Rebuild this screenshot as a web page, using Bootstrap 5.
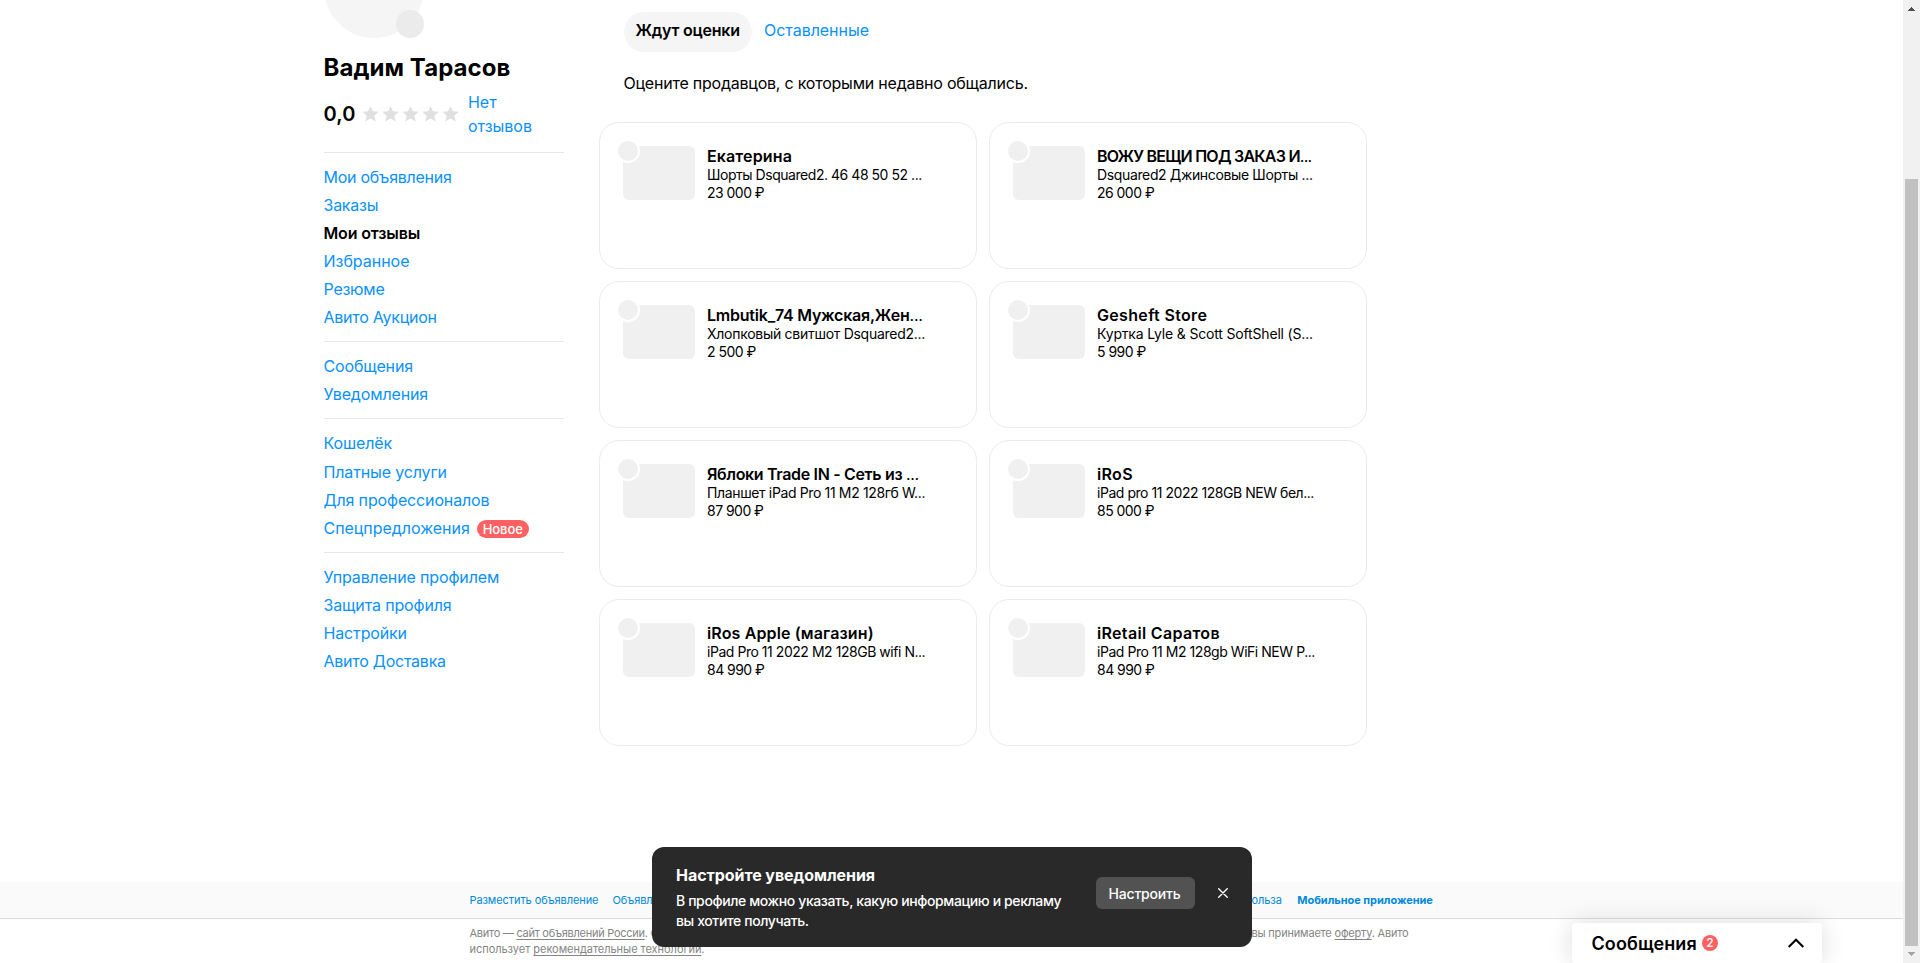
<!DOCTYPE html>
<html lang="ru">
<head>
<meta charset="utf-8">
<meta name="viewport" content="width=device-width, initial-scale=1">
<title>Мои отзывы</title>
<link href="https://cdn.jsdelivr.net/npm/bootstrap@5.3.0/dist/css/bootstrap.min.css" rel="stylesheet">
<style>
html, body { height: 963px; overflow: hidden; }
body { font-family: Inter, "Open Sans", sans-serif; font-size: 16px; line-height: 24px; color: #000; background: #fff; }
a { color: #0a91fb; text-decoration: none; }
.page { width: 1903px; height: 963px; overflow: hidden; }
.content-area { height: 882px; padding-left: 323.5px; }
.sidebar { width: 240px; margin-top: -62px; letter-spacing: -.14px; }
.avatar { width: 100px; height: 100px; background: #f5f5f5; border-radius: 50%; position: relative; }
.avatar-edit { position: absolute; right: 0; bottom: 0; width: 28px; height: 28px; border-radius: 50%; background: #ebebeb; }
.user-name { font-size: 24px; line-height: 32px; font-weight: 700; letter-spacing: .06px; margin: 14px 0 6px; white-space: nowrap; }
.score { font-size: 20px; font-weight: 600; width: 38px; letter-spacing: .2px; }
.rating { height: 48px; }
.stars { margin-right: 6.5px; }
.sidebar hr { margin: 12px 0; border: 0; height: 1px; background: #e7e7e7; opacity: 1; }
.sidebar .rating + hr { margin-top: 14px; }
.menu { display: flex; flex-direction: column; gap: 4px; }
.menu a { white-space: nowrap; height: 24px; display: flex; align-items: center; }
.menu a.current { color: #000; font-weight: 600; }
.menu a.tall { height: 25px; align-items: flex-start; }
.tag-new { background: #ff6163; color: #fff; font-size: 13px; font-weight: 500; line-height: 18px; height: 18px; width: 52px; border-radius: 9px; margin: 1px 0 0 7px; text-align: center; }
.tight { letter-spacing: -.25px; }
.even { letter-spacing: -.03px; }
.reviews { margin-left: 35.5px; padding-top: 12px; width: 768px; }
.tabs { margin-left: 25px; height: 40px; letter-spacing: -.04px; }
.tabs a { height: 40px; padding: 6px 12px; border-radius: 20px; white-space: nowrap; width: 128px; }
.tabs a.current { background: #f5f5f5; color: #000; font-weight: 600; letter-spacing: -.22px; padding-left: 11.500px; }
.hint { margin: 19px 0 27px 24.500px; white-space: nowrap; letter-spacing: -.22px; }
.seller-grid { display: grid; grid-template-columns: 378px 378px; gap: 12px; }
.seller { height: 147px; border: 1px solid #ebebeb; border-radius: 20px; padding: 23px; display: flex; }
.thumb { width: 72px; height: 54px; border-radius: 6px; background: #f0f0f0; position: relative; flex: none; }
.thumb::before { content: ""; position: absolute; left: -7px; top: -7px; width: 24px; height: 24px; border: 2px solid #fff; border-radius: 50%; background: #f0f0f0; }
.seller-info { margin-left: 12px; font-size: 14px; line-height: 18px; white-space: nowrap; letter-spacing: -.46px; }
.seller-name { font-size: 16px; font-weight: 600; line-height: 20px; letter-spacing: .13px; }
.seller-price { letter-spacing: -.53px; }
.name-caps { letter-spacing: -.76px; }
.name-long { letter-spacing: -.22px; }
.name-spaced { letter-spacing: -.33px; }
.name-latin { letter-spacing: .33px; }
.desc-brand { letter-spacing: -.17px; }
.desc-hoodie { letter-spacing: -.275px; }
.desc-mixed { letter-spacing: -.36px; }
.footer-links { height: 37px; background: #fafafa; border-bottom: 1px solid #dcdcdc; padding-left: 469.500px; font-size: 11px; line-height: 36px; white-space: nowrap; letter-spacing: -.09px; }
.footer-links a { color: #0089db; }
.footer-links .gap-link { margin-left: 14px; }
.footer-links .app-link { margin-left: 15.500px; letter-spacing: -.03px; }
.legal { padding: 6px 0 0 469.500px; font-size: 11px; line-height: 16px; color: #858585; white-space: nowrap; letter-spacing: -.035px; }
.legal a { color: #858585; text-decoration: underline; text-underline-offset: 2px; }
.legal-first { letter-spacing: -.27px; }
.legal-end { letter-spacing: -.188px; }
.left-part { width: 782px; }
.notice { position: absolute; left: 652px; top: 847px; width: 600px; height: 100px; background: #292929; border-radius: 12px; color: #fff; padding: 16px 24px; }
.notice-title { font-size: 16px; font-weight: 700; line-height: 24px; letter-spacing: -.054px; margin-bottom: 4px; }
.notice-text { font-size: 14px; line-height: 20px; font-weight: 500; width: 421px; white-space: nowrap; letter-spacing: -.385px; }
.notice-btn { background: #525252; color: #fff; font-size: 14px; font-weight: 500; width: 99px; height: 32px; border-radius: 6px; padding: 0 2px 0 0; line-height: 29px; border: 0; margin: 14px 0 0 1px; letter-spacing: -.19px; flex: none; }
.notice svg { margin: 25px 0 0 23px; }
.messenger { position: absolute; left: 1572px; top: 923px; width: 250px; height: 40px; background: #fff; border-radius: 4px; box-shadow: 0 0 24px rgba(0,0,0,.14); padding: 0 18px 0 19.500px; }
.messenger-title { font-size: 18px; font-weight: 600; line-height: 41px; width: 110.500px; white-space: nowrap; letter-spacing: .08px; }
.counter { width: 16px; height: 16px; border-radius: 50%; background: #ff6163; color: #fff; font-size: 12px; line-height: 16px; text-align: center; font-weight: 500; }
.scroll-rail { position: absolute; left: 1903px; top: 0; width: 17px; height: 963px; background: #f1f1f1; }
</style>
</head>
<body>
<div class="page">
  <main class="content-area d-flex align-items-start">
    <aside class="sidebar">
      <div class="avatar"><div class="avatar-edit"></div></div>
      <h1 class="user-name">Вадим Тарасов</h1>
      <div class="rating d-flex align-items-center">
        <span class="score">0,0</span>
        <svg class="stars" width="100" height="16" viewBox="0 0 100 16" fill="#e0e0e0"><defs><path id="star" d="M8.500 0l2.400 5.300 5.900.5-4.500 3.900 1.400 5.900-5.200-3.100-5.200 3.100 1.400-5.900L.2 5.800l5.900-.5z"/></defs><use href="#star"/><use href="#star" x="20"/><use href="#star" x="40"/><use href="#star" x="60"/><use href="#star" x="80"/></svg>
        <a href="#" class="even">Нет<br>отзывов</a>
      </div>
      <hr>
      <nav class="menu">
        <a href="#" class="tight">Мои объявления</a>
        <a href="#" class="tight">Заказы</a>
        <a href="#" class="current">Мои отзывы</a>
        <a href="#" class="even">Избранное</a>
        <a href="#" class="tight">Резюме</a>
        <a href="#" class="tight">Авито Аукцион</a>
      </nav>
      <hr>
      <nav class="menu">
        <a href="#">Сообщения</a>
        <a href="#">Уведомления</a>
      </nav>
      <hr>
      <nav class="menu">
        <a href="#" class="tall">Кошелёк</a>
        <a href="#">Платные услуги</a>
        <a href="#">Для профессионалов</a>
        <a href="#" class="even">Спецпредложения<span class="tag-new">Новое</span></a>
      </nav>
      <hr>
      <nav class="menu">
        <a href="#">Управление профилем</a>
        <a href="#">Защита профиля</a>
        <a href="#">Настройки</a>
        <a href="#" class="tight">Авито Доставка</a>
      </nav>
    </aside>
    <section class="reviews">
      <nav class="tabs d-flex"><a href="#" class="current">Ждут оценки</a><a href="#">Оставленные</a></nav>
      <p class="hint">Оцените продавцов, с которыми недавно общались.</p>
      <div class="seller-grid">
        <article class="seller"><div class="thumb"></div><div class="seller-info"><div class="seller-name">Екатерина</div><div>Шорты Dsquared2. 46 48 50 52 ...</div><div class="seller-price">23 000 ₽</div></div></article>
        <article class="seller"><div class="thumb"></div><div class="seller-info"><div class="seller-name name-caps">ВОЖУ ВЕЩИ ПОД ЗАКАЗ И<span class="fw-normal">...</span></div><div class="desc-mixed">Dsquared2 Джинсовые Шорты ...</div><div class="seller-price">26 000 ₽</div></div></article>
        <article class="seller"><div class="thumb"></div><div class="seller-info"><div class="seller-name name-long">Lmbutik_74 Мужская,Жен<span class="fw-normal">...</span></div><div class="desc-hoodie">Хлопковый свитшот Dsquared2...</div><div class="seller-price">2 500 ₽</div></div></article>
        <article class="seller"><div class="thumb"></div><div class="seller-info"><div class="seller-name name-latin">Gesheft Store</div><div class="desc-brand">Куртка Lyle &amp; Scott SoftShell (S...</div><div class="seller-price">5 990 ₽</div></div></article>
        <article class="seller"><div class="thumb"></div><div class="seller-info"><div class="seller-name name-spaced">Яблоки Trade IN - Сеть из <span class="fw-normal">...</span></div><div class="desc-mixed">Планшет iPad Pro 11 M2 128гб W...</div><div class="seller-price">87 900 ₽</div></div></article>
        <article class="seller"><div class="thumb"></div><div class="seller-info"><div class="seller-name name-latin">iRoS</div><div>iPad pro 11 2022 128GB NEW бел...</div><div class="seller-price">85 000 ₽</div></div></article>
        <article class="seller"><div class="thumb"></div><div class="seller-info"><div class="seller-name">iRos Apple (магазин)</div><div>iPad Pro 11 2022 M2 128GB wifi N...</div><div class="seller-price">84 990 ₽</div></div></article>
        <article class="seller"><div class="thumb"></div><div class="seller-info"><div class="seller-name name-latin">iRetail Саратов</div><div>iPad Pro 11 M2 128gb WiFi NEW P...</div><div class="seller-price">84 990 ₽</div></div></article>
      </div>
    </section>
  </main>
  <footer>
    <div class="footer-links d-flex">
      <div class="left-part d-flex"><a href="#">Разместить объявление</a><a href="#" class="gap-link">Объявления</a></div>
      <a href="#">ольза</a><a href="#" class="fw-bold app-link">Мобильное приложение</a>
    </div>
    <div class="legal d-flex">
      <div class="left-part"><span class="legal-first">Авито — <a href="#">сайт объявлений России</a>. О</span><br>использует <a href="#">рекомендательные технологии</a>.</div>
      <div class="legal-end">вы принимаете <a href="#">оферту</a>. Авито</div>
    </div>
  </footer>
</div>
<div class="notice d-flex align-items-start">
  <div class="notice-text">
    <div class="notice-title">Настройте уведомления</div>
    В профиле можно указать, какую информацию и рекламу<br>вы хотите получать.
  </div>
  <button class="notice-btn btn" type="button">Настроить</button>
  <svg width="10" height="10" viewBox="0 0 10 10" stroke="#fff" stroke-width="1.400" stroke-linecap="round"><path d="M.7.7l8.600 8.600M9.300.7L.7 9.300"/></svg>
</div>
<div class="messenger d-flex align-items-center">
  <span class="messenger-title">Сообщения</span><span class="counter">2</span>
  <svg class="ms-auto" width="16" height="10" viewBox="0 0 16 10" fill="none" stroke="#000" stroke-width="2"><path d="M.7 9L8 1.700 15.300 9"/></svg>
</div>
<svg class="scroll-rail" viewBox="0 0 17 963" shape-rendering="crispEdges"><rect x="2" y="179" width="13" height="767" fill="#c1c1c1"/><path d="M5 11h7L8.500 7z" fill="#505050"/><path d="M5 952h7L8.500 956z" fill="#a3a3a3"/></svg>
<script src="https://cdn.jsdelivr.net/npm/bootstrap@5.3.0/dist/js/bootstrap.bundle.min.js"></script>
</body>
</html>
